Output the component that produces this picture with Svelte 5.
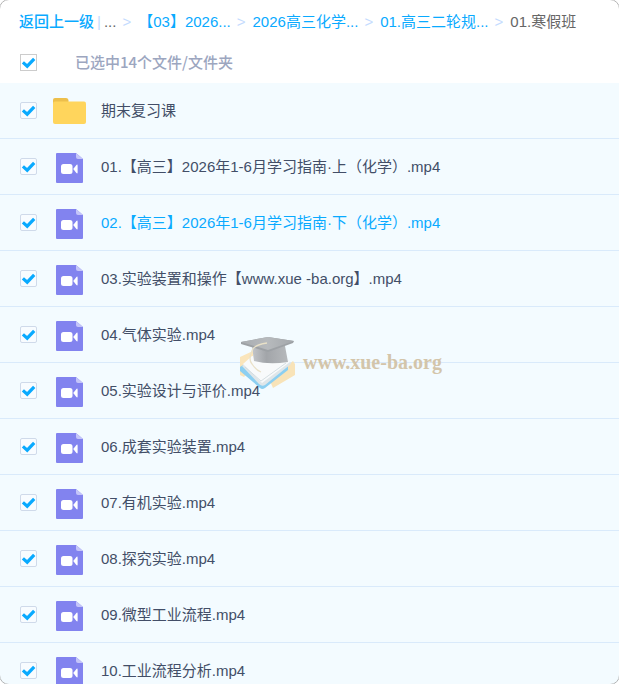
<script lang="ts">
	type Entry = { name: string; folder?: boolean; active?: boolean; checked: boolean };

	const crumbs = ["【03】2026...", "2026高三化学...", "01.高三二轮规..."];
	const current = "01.寒假班";

	let files = $state<Entry[]>([
		{ name: "期末复习课", folder: true, checked: true },
		{ name: "01.【高三】2026年1-6月学习指南·上（化学）.mp4", checked: true },
		{ name: "02.【高三】2026年1-6月学习指南·下（化学）.mp4", active: true, checked: true },
		{ name: "03.实验装置和操作【www.xue -ba.org】.mp4", checked: true },
		{ name: "04.气体实验.mp4", checked: true },
		{ name: "05.实验设计与评价.mp4", checked: true },
		{ name: "06.成套实验装置.mp4", checked: true },
		{ name: "07.有机实验.mp4", checked: true },
		{ name: "08.探究实验.mp4", checked: true },
		{ name: "09.微型工业流程.mp4", checked: true },
		{ name: "10.工业流程分析.mp4", checked: true },
	]);

	let allChecked = $state(true);

	function toggleAll() {
		for (const file of files) file.checked = allChecked;
	}
</script>

{#snippet tick()}
	<svg class="tick" viewBox="0 0 17 17" aria-hidden="true">
		<path d="M2.9 8.4 7.2 12.2 14.2 4.9" fill="none" stroke="#09aaff" stroke-width="3.2" />
	</svg>
{/snippet}

<main class="panel">
	<nav class="crumbs">
		<a href="#up" class="back">返回上一级</a>
		<span class="bar">|</span>
		<span class="more">...</span>
		{#each crumbs as crumb (crumb)}
			<span class="arrow">&gt;</span>
			<a href="#folder">{crumb}</a>
		{/each}
		<span class="arrow">&gt;</span>
		<span class="current">{current}</span>
	</nav>

	<label class="summary">
		<span class="check plain">
			<input type="checkbox" bind:checked={allChecked} onchange={toggleAll} />
			{@render tick()}
		</span>
		<span>已选中14个文件/文件夹</span>
	</label>

	<ul class="files">
		{#each files as file (file.name)}
			<li>
				<label class="row" class:active={file.active}>
					<span class="check">
						<input type="checkbox" bind:checked={file.checked} />
						{@render tick()}
					</span>
					<span class="icon">
						{#if file.folder}
							<svg class="folder" viewBox="0 0 33 27" aria-hidden="true">
								<path d="M0 3Q0 1 2 1H13Q15 1 15.5 3V9H0Z" fill="#edbf4b" />
								<rect y="4.5" width="33" height="22.5" rx="2" fill="#ffd55c" />
							</svg>
						{:else}
							<svg class="video" viewBox="0 0 27 30" aria-hidden="true">
								<path d="M1 0H20L27 6V29Q27 30 26 30H1Q0 30 0 29V1Q0 0 1 0Z" fill="#8283ef" />
								<path d="M20 0 27 6H22Q20 6 20 4Z" fill="#c4c5f9" />
								<rect x="5" y="11" width="11.5" height="10" rx="2.5" fill="#fff" />
								<path d="M17.2 16 20.4 12Q21.6 11 21.6 12.5V19.5Q21.6 21 20.4 20Z" fill="#fff" />
							</svg>
						{/if}
					</span>
					<span class="name">{file.name}</span>
				</label>
			</li>
		{/each}
	</ul>

	<div class="watermark">
		<svg viewBox="0 0 56 54" aria-hidden="true">
			<defs>
				<linearGradient id="cap" x1="0" x2="1">
					<stop offset="0" stop-color="#c3c6ca" />
					<stop offset="0.4" stop-color="#a2a5a9" />
					<stop offset="1" stop-color="#b6b9bc" />
				</linearGradient>
				<linearGradient id="board" x1="0" x2="1">
					<stop offset="0" stop-color="#a9adb1" />
					<stop offset="0.5" stop-color="#b7babd" />
					<stop offset="1" stop-color="#a3a7ab" />
				</linearGradient>
			</defs>
			<path d="M0 20 13 14V30L4 40 0 38Z" fill="#fae5bb" />
			<path d="M30 44 53 24 55 27V38L33 51Z" fill="#f8e3b8" />
			<path d="M0 30 3 28 22 47 48 27V33L25 51Q22 53 20 51L0 34Z" fill="#8ccff1" />
			<path d="M2 29 12 20 48 23 51 27 25 48Q22 50 19 47Z" fill="#dfe6e9" />
			<path d="M3 27 12 19 47 22 50 25 22 46Z" fill="#f8fafb" />
			<path d="M5 30 21 44 46 26" fill="none" stroke="#cbd7dc" stroke-width=".8" />
			<path d="M12 9 14 24Q29 28 48 25L45 9Z" fill="url(#cap)" />
			<path d="M1 5 28 0 54 4 53 6 28 15 1 7Z" fill="#9da1a5" />
			<path d="M1 5 28 0 54 4 28 13Z" fill="url(#board)" />
			<path d="M27 6Q13 8 12 14 8 22 12 27 16 33 21 35" fill="none" stroke="#e9e1c8" stroke-width="1.3" />
		</svg>
		<span>www.xue-ba.org</span>
	</div>
</main>

<style>
	:global(body) {
		margin: 0;
		background: #fff;
	}

	.panel {
		position: relative;
		height: 100vh;
		overflow: hidden;
		background: #fff;
		color: #424e67;
		font: 15px/20px "Liberation Sans", "Noto Sans CJK SC", sans-serif;
	}

	/* thin rounded edge that only shows in the corners */
	.panel::after {
		content: "";
		position: absolute;
		inset: -1px;
		z-index: 3;
		border: 1px solid #b5b5b5;
		border-radius: 10px;
		box-shadow: 0 0 0 8px #fff;
		pointer-events: none;
	}

	.crumbs {
		display: flex;
		align-items: center;
		height: 43px;
		padding-left: 19px;
		white-space: nowrap;
	}

	.crumbs a {
		color: #09aaff;
		text-decoration: none;
	}

	.crumbs .back {
		font-weight: 500;
	}

	.bar {
		margin: 0 3px;
		color: #c4dbfe;
	}

	.more,
	.current {
		color: #666;
	}

	.arrow {
		margin: 0 7px 0 6px;
		color: #c4dbfe;
	}

	.summary {
		display: flex;
		align-items: center;
		gap: 38px;
		height: 38px;
		padding: 0 0 2px 20px;
		color: #9ca6bf;
		font-family: "Noto Sans CJK SC", sans-serif;
		font-weight: 500;
	}

	.check {
		position: relative;
		flex: none;
		width: 17px;
		height: 17px;
	}

	.check input {
		appearance: none;
		display: block;
		box-sizing: border-box;
		width: 17px;
		height: 17px;
		margin: 0;
		border: 1px solid #cfdaea;
		border-radius: 2px;
		background: #f8fcff;
	}

	.check.plain input {
		border-color: #ccc;
		border-radius: 0;
		background: #fff;
	}

	.tick {
		position: absolute;
		inset: 0;
		visibility: hidden;
		pointer-events: none;
	}

	.check input:checked + :global(.tick) {
		visibility: visible;
	}

	.files {
		margin: 0;
		padding: 0;
		list-style: none;
		background: #f3fbff;
	}

	.files li {
		border-bottom: 1px solid #d9eafb;
	}

	.row {
		display: flex;
		align-items: center;
		height: 55px;
		padding-left: 20px;
	}

	.icon {
		display: flex;
		justify-content: center;
		width: 33px;
		margin: 0 15px 0 16px;
	}

	.folder {
		width: 33px;
		height: 27px;
	}

	.video {
		width: 27px;
		height: 30px;
		padding-top: 2px;
	}

	.name {
		position: relative;
		z-index: 2;
		white-space: nowrap;
	}

	.active .name {
		color: #09aaff;
	}

	.watermark {
		position: absolute;
		top: 337px;
		left: 240px;
		z-index: 1;
		display: flex;
		align-items: center;
		gap: 7px;
		color: #d3c5aa;
		font: bold 20px/24px "Liberation Serif", serif;
		pointer-events: none;
	}

	.watermark svg {
		width: 56px;
		height: 54px;
	}

	.watermark span {
		padding-bottom: 4px;
	}
</style>
